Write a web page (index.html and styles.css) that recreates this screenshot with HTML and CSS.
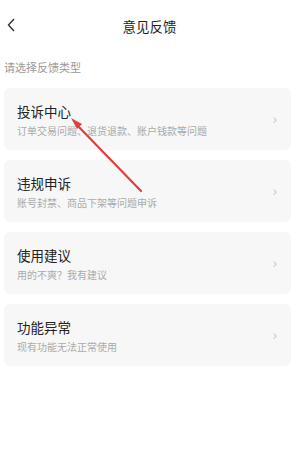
FILE: index.html
```html
<!DOCTYPE html>
<html lang="zh-CN">
  <head>
    <meta charset="UTF-8" />
    <meta name="viewport" content="width=device-width, initial-scale=1.0" />
    <title>意见反馈</title>
    <link rel="stylesheet" href="styles.css">
  </head>
  <body>
    <div class="page">
      <div class="header">
        <span class="back">
          <svg width="8" height="14" viewBox="0 0 8 14"><path d="M7 1 L1.5 7 L7 13" fill="none" stroke="#333" stroke-width="1.4"/></svg>
        </span>
        <span class="title">意见反馈</span>
      </div>

      <div class="hint">请选择反馈类型</div>

      <div class="list">
        <div class="card">
          <div class="text">
            <div class="name">投诉中心</div>
            <div class="desc">订单交易问题、退货退款、账户钱款等问题</div>
          </div>
          <span class="arrow">›</span>
        </div>
        <div class="card">
          <div class="text">
            <div class="name">违规申诉</div>
            <div class="desc">账号封禁、商品下架等问题申诉</div>
          </div>
          <span class="arrow">›</span>
        </div>
        <div class="card">
          <div class="text">
            <div class="name">使用建议</div>
            <div class="desc">用的不爽？我有建议</div>
          </div>
          <span class="arrow">›</span>
        </div>
        <div class="card">
          <div class="text">
            <div class="name">功能异常</div>
            <div class="desc">现有功能无法正常使用</div>
          </div>
          <span class="arrow">›</span>
        </div>
      </div>

      <!-- 标注箭头 -->
      <svg class="mark" width="299" height="463" viewBox="0 0 299 463">
        <line x1="141" y1="191" x2="76" y2="124" stroke="#e0403c" stroke-width="2.2" stroke-linecap="round"/>
        <path d="M71 118 L82 124 L77 129 Z" fill="#e0403c"/>
      </svg>
    </div>
  </body>
</html>
```

FILE: styles.css
```css
body {
  margin: 0;
  background-color: #fff;
  font-family: "Noto Sans CJK SC", "Noto Sans", sans-serif;
}

.page {
  position: relative;
  width: 299px;
  height: 463px;
  overflow: hidden;
}

.header {
  position: relative;
  height: 52px;
  display: flex;
  align-items: center;
  justify-content: center;
}

.back {
  position: absolute;
  left: 7px;
  top: 18px;
  display: flex;
}

.title {
  font-size: 13.5px;
  color: #222;
}

.hint {
  padding: 8px 0 0 4px;
  font-size: 11px;
  color: #999;
  height: 20px;
  line-height: 14px;
}

.list {
  display: flex;
  flex-direction: column;
  gap: 10px;
  padding: 8px 8px 0 4px;
}

.card {
  display: flex;
  align-items: center;
  height: 62px;
  padding: 0 14px 0 13px;
  background-color: #f7f7f7;
  border-radius: 6px;
}

.text {
  flex: 1;
}

.name {
  font-size: 13.5px;
  color: #222;
  line-height: 18px;
}

.desc {
  margin-top: 5px;
  font-size: 10px;
  color: #aaa;
  line-height: 12px;
}

.arrow {
  font-size: 14px;
  color: #c4c4c4;
  margin-top: -2px;
}

.mark {
  position: absolute;
  left: 0;
  top: 0;
  pointer-events: none;
}
```
